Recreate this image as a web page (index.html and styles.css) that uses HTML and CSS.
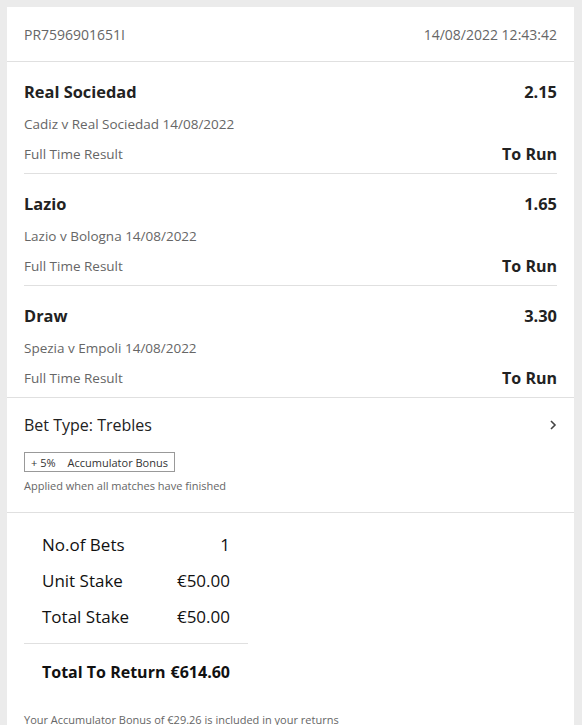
FILE: index.html
```html
<!DOCTYPE html>
<html lang="en">

<head>
    <meta charset="UTF-8">
    <meta name="viewport" content="width=device-width, initial-scale=1.0">
    <title>Bet Receipt</title>
    <link rel="stylesheet" href="styles.css">
</head>

<body>
    <div class="card">
        <div class="receipt-head">
            <span>PR7596901651I</span>
            <span>14/08/2022 12:43:42</span>
        </div>

        <div class="selections">
            <div class="selection">
                <div class="row title"><span>Real Sociedad</span><span>2.15</span></div>
                <div class="row desc"><span>Cadiz v Real Sociedad 14/08/2022</span></div>
                <div class="row market"><span>Full Time Result</span><strong>To Run</strong></div>
            </div>
            <div class="selection">
                <div class="row title"><span>Lazio</span><span>1.65</span></div>
                <div class="row desc"><span>Lazio v Bologna 14/08/2022</span></div>
                <div class="row market"><span>Full Time Result</span><strong>To Run</strong></div>
            </div>
            <div class="selection">
                <div class="row title"><span>Draw</span><span>3.30</span></div>
                <div class="row desc"><span>Spezia v Empoli 14/08/2022</span></div>
                <div class="row market"><span>Full Time Result</span><strong>To Run</strong></div>
            </div>
        </div>

        <div class="bet-type">
            <div class="row type-title">
                <span>Bet Type: Trebles</span>
                <svg class="chevron" width="8" height="12" viewBox="0 0 8 12">
                    <polyline points="2,2 6,6 2,10" fill="none" stroke="#444" stroke-width="1.6" />
                </svg>
            </div>
            <div class="bonus-badge"><span>+ 5%</span><span>Accumulator Bonus</span></div>
            <div class="bonus-note">Applied when all matches have finished</div>
        </div>

        <div class="summary">
            <div class="stakes">
                <div class="row"><span>No.of Bets</span><span>1</span></div>
                <div class="row"><span>Unit Stake</span><span>€50.00</span></div>
                <div class="row"><span>Total Stake</span><span>€50.00</span></div>
            </div>
            <div class="returns">
                <div class="row"><span>Total To Return</span><span>€614.60</span></div>
            </div>
            <p class="bonus-info">Your Accumulator Bonus of €29.26 is included in your returns</p>
        </div>
    </div>
</body>

</html>
```

FILE: styles.css
```css
body {
    margin: 0;
    padding: 7px 8px 0 7px;
    background-color: #ebebeb;
    font-family: 'Open Sans', sans-serif;
    color: #222;
}

.card {
    background: #ffffff;
    min-height: 718px;
}

.row {
    display: flex;
    justify-content: space-between;
    align-items: center;
}

.receipt-head {
    display: flex;
    justify-content: space-between;
    align-items: center;
    height: 54px;
    padding: 0 17px;
    font-size: 14px;
    color: #666;
    border-bottom: 1px solid #e0e0e0;
}

.selections {
    padding: 0 17px;
    border-bottom: 1px solid #e0e0e0;
}

.selection {
    padding: 17px 0 9px;
    border-bottom: 1px solid #e0e0e0;
}

.selection:last-child {
    border-bottom: none;
}

.selection .title {
    height: 24px;
    font-size: 16.4px;
    font-weight: 700;
}

.selection .desc {
    height: 20px;
    margin-top: 11px;
    font-size: 13.5px;
    color: #666;
}

.selection .market {
    height: 20px;
    margin-top: 10px;
    font-size: 13.5px;
    color: #666;
}

.selection .market strong {
    font-size: 16px;
    color: #222;
}

.bet-type {
    padding: 15px 17px 18px;
    border-bottom: 1px solid #e0e0e0;
}

.type-title {
    height: 24px;
    font-size: 16px;
    color: #222;
}

.bonus-badge {
    display: inline-flex;
    gap: 12px;
    align-items: center;
    height: 18px;
    margin-top: 15px;
    padding: 0 6px;
    border: 1px solid #999;
    font-size: 11px;
    color: #333;
}

.bonus-note {
    height: 16px;
    margin-top: 6px;
    font-size: 11px;
    line-height: 16px;
    color: #666;
}

.summary {
    padding: 13px 17px 0;
}

.stakes {
    width: 224px;
    padding: 0 18px 9px;
    box-sizing: border-box;
    border-bottom: 1px solid #e0e0e0;
}

.stakes .row,
.returns .row {
    height: 36px;
    font-size: 17px;
    color: #111;
}

.returns {
    width: 224px;
    padding: 10px 18px 0;
    box-sizing: border-box;
}

.returns .row {
    font-size: 16px;
    font-weight: 700;
}

.bonus-info {
    margin: 22px 0 0;
    font-size: 11px;
    color: #666;
}
```
